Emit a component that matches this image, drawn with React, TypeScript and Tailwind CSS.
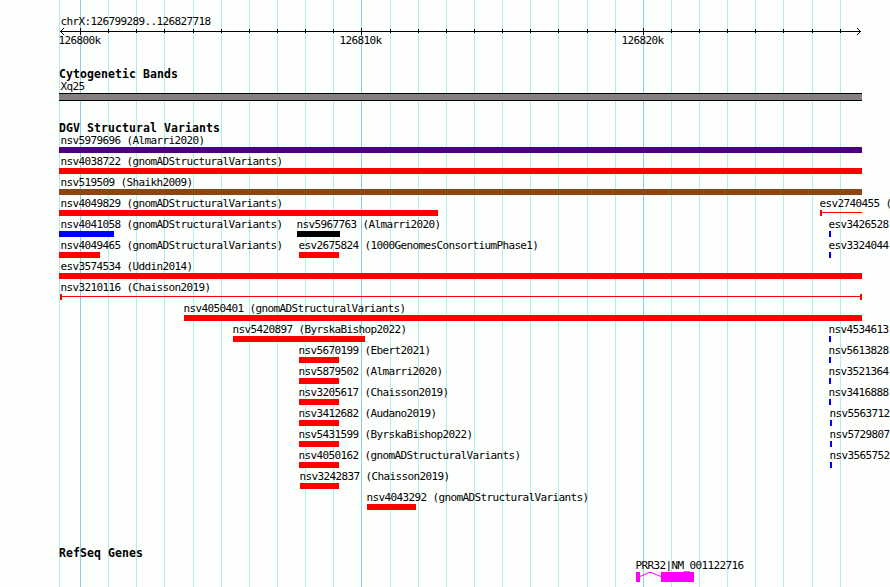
const LEFT = 59;
const RIGHT = 862;

const RED = 'bg-[#ff0000]';
const BLUE = 'bg-[#0000ff]';
const BLACK = 'bg-black';

type Feature = {
  name: string;
  start: number;
  end: number;
  color?: string;
  thin?: boolean;
  capRight?: boolean;
};

const rows: Feature[][] = [
  [{ name: 'nsv5979696 (Almarri2020)', start: LEFT, end: RIGHT, color: 'bg-[#4b0082]' }],
  [{ name: 'nsv4038722 (gnomADStructuralVariants)', start: LEFT, end: RIGHT }],
  [{ name: 'nsv519509 (Shaikh2009)', start: LEFT, end: RIGHT, color: 'bg-[#8b4513]' }],
  [
    { name: 'nsv4049829 (gnomADStructuralVariants)', start: LEFT, end: 438 },
    { name: 'esv2740455 (', start: 820, end: RIGHT, thin: true },
  ],
  [
    { name: 'nsv4041058 (gnomADStructuralVariants)', start: LEFT, end: 114, color: BLUE },
    { name: 'nsv5967763 (Almarri2020)', start: 297, end: 340, color: BLACK },
    { name: 'esv3426528', start: 829, end: 831, color: BLUE },
  ],
  [
    { name: 'nsv4049465 (gnomADStructuralVariants)', start: LEFT, end: 100 },
    { name: 'esv2675824 (1000GenomesConsortiumPhase1)', start: 299, end: 339 },
    { name: 'esv3324044', start: 829, end: 831, color: BLUE },
  ],
  [{ name: 'esv3574534 (Uddin2014)', start: LEFT, end: RIGHT }],
  [{ name: 'nsv3210116 (Chaisson2019)', start: 60, end: RIGHT, thin: true, capRight: true }],
  [{ name: 'nsv4050401 (gnomADStructuralVariants)', start: 184, end: RIGHT }],
  [
    { name: 'nsv5420897 (ByrskaBishop2022)', start: 233, end: 365 },
    { name: 'nsv4534613', start: 829, end: 831, color: BLUE },
  ],
  [
    { name: 'nsv5670199 (Ebert2021)', start: 299, end: 339 },
    { name: 'nsv5613828', start: 829, end: 831, color: BLUE },
  ],
  [
    { name: 'nsv5879502 (Almarri2020)', start: 299, end: 339 },
    { name: 'nsv3521364', start: 829, end: 831, color: BLUE },
  ],
  [
    { name: 'nsv3205617 (Chaisson2019)', start: 299, end: 339 },
    { name: 'nsv3416888', start: 829, end: 831, color: BLUE },
  ],
  [
    { name: 'nsv3412682 (Audano2019)', start: 299, end: 339 },
    { name: 'nsv5563712', start: 830, end: 832, color: BLUE },
  ],
  [
    { name: 'nsv5431599 (ByrskaBishop2022)', start: 299, end: 339 },
    { name: 'nsv5729807', start: 830, end: 832, color: BLUE },
  ],
  [
    { name: 'nsv4050162 (gnomADStructuralVariants)', start: 299, end: 339 },
    { name: 'nsv3565752', start: 830, end: 832, color: BLUE },
  ],
  [{ name: 'nsv3242837 (Chaisson2019)', start: 300, end: 339 }],
  [{ name: 'nsv4043292 (gnomADStructuralVariants)', start: 367, end: 416 }],
];

const gridLines = [
  80, 108, 136, 164, 193, 221, 249, 277, 305, 333, 361, 390, 418, 446, 474, 502, 530, 558, 587, 615,
  643, 671, 699, 727, 755, 783, 812, 840,
];
const majorLines = [80, 361, 643];

function GridLines() {
  return (
    <svg className="absolute inset-0" width="890" height="587" shapeRendering="crispEdges">
      <rect x={LEFT} y="0" width="1" height="587" fill="#afeeee" />
      {gridLines.map((x) => (
        <rect key={x} x={x} y="0" width="1" height="587" fill={majorLines.includes(x) ? '#87ceeb' : '#afeeee'} />
      ))}
    </svg>
  );
}

function Axis() {
  return (
    <svg className="block h-[8px] w-[890px]" viewBox="0 0 890 8" shapeRendering="crispEdges">
      <rect x="60" y="3" width="801" height="1" />
      {gridLines.map((x) =>
        majorLines.includes(x) ? (
          <rect key={x} x={x} y="0" width="1" height="7" />
        ) : (
          <rect key={x} x={x} y="1" width="1" height="4" />
        ),
      )}
      {[0, 1, 2, 3].map((i) => (
        <g key={i}>
          <rect x={60 + i} y={3 - i} width="1" height="1" />
          <rect x={60 + i} y={3 + i} width="1" height="1" />
          <rect x={860 - i} y={3 - i} width="1" height="1" />
          <rect x={860 - i} y={3 + i} width="1" height="1" />
        </g>
      ))}
    </svg>
  );
}

function TrackTitle({ children }: { children: string }) {
  return (
    <h2 className="h-[12px] pl-[59px] text-[11.5px] leading-[14px] font-bold tracking-[0.077px]">{children}</h2>
  );
}

function FeatureGlyph({ feature }: { feature: Feature }) {
  const { name, start, end, color = RED, thin, capRight } = feature;
  // labels of features that run off the left edge sit just inside it
  const labelAt = Math.max(60.4, start - 0.6);
  return (
    <div className="col-start-1 row-start-1 h-[21px]">
      <div className="h-[14px] whitespace-pre" style={{ marginLeft: labelAt }}>
        {name}
      </div>
      {thin ? (
        <div className="flex h-[6px]" style={{ marginLeft: start, width: end - start }}>
          <div className={`w-[2px] ${color}`} />
          <div className={`mt-[2px] h-px flex-1 ${color}`} />
          {capRight && <div className={`w-[2px] ${color}`} />}
        </div>
      ) : (
        <div className={`h-[6px] ${color}`} style={{ marginLeft: start, width: end - start }} />
      )}
    </div>
  );
}

export default function App() {
  return (
    <div className="relative h-[587px] w-[890px] overflow-hidden bg-[#fdfffc] font-['DejaVu_Sans_Mono',monospace] text-[11px] leading-[16px] tracking-[-0.623px] text-black">
      <GridLines />
      <div className="relative flex flex-col">
        <div className="mt-[14px] h-[14px] pl-[60.4px]">chrX:126799289..126827718</div>
        <Axis />
        <div className="-mt-[3px] grid h-[14px]">
          <span className="col-start-1 row-start-1 ml-[58.4px]">126800k</span>
          <span className="col-start-1 row-start-1 ml-[339.4px]">126810k</span>
          <span className="col-start-1 row-start-1 ml-[621.4px]">126820k</span>
        </div>

        <section className="mt-[20px]">
          <TrackTitle>Cytogenetic Bands</TrackTitle>
          <div className="h-[14px] pl-[60.4px]">Xq25</div>
          <div className="ml-[59px] h-[8px] w-[803px] border-y border-black bg-[#848082]" />
        </section>

        <section className="mt-[20px]">
          <TrackTitle>DGV Structural Variants</TrackTitle>
          {rows.map((row) => (
            <div key={row[0].name} className="grid grid-cols-[890px]">
              {row.map((feature) => (
                <FeatureGlyph key={feature.name} feature={feature} />
              ))}
            </div>
          ))}
        </section>

        <section className="mt-[35px]">
          <TrackTitle>RefSeq Genes</TrackTitle>
          <div className="h-[14px] pl-[635.4px]">PRR32|NM_001122716</div>
          <div className="ml-[636px] flex h-[10px]">
            <div className="w-[4px] bg-[#ff00ff]" />
            <svg className="h-[10px] w-[21px]" viewBox="0 0 21 10" fill="none" stroke="#ff00ff">
              <path d="M0 4.5 L9 0.5 H11 L21 4.5" />
            </svg>
            <div className="w-[33px] bg-[#ff00ff]" />
          </div>
        </section>
      </div>
    </div>
  );
}
